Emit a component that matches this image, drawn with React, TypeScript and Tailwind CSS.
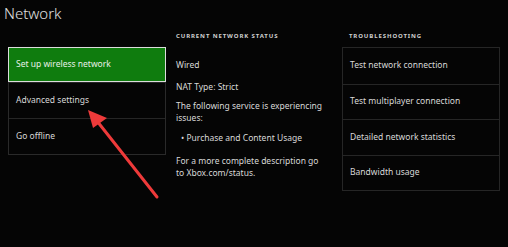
import React from "react";

const font = { fontFamily: '"Noto Sans", "Liberation Sans", Arial, sans-serif' };

const leftItems = ["Set up wireless network", "Advanced settings", "Go offline"];
const troubleItems = [
  "Test network connection",
  "Test multiplayer connection",
  "Detailed network statistics",
  "Bandwidth usage",
];

function Heading({ children }: { children: React.ReactNode }) {
  return (
    <div className="h-[18px] text-[6px] font-bold uppercase tracking-[0.9px] text-[#cfcfcf] leading-[14px]">
      {children}
    </div>
  );
}

export default function App() {
  return (
    <div
      className="relative w-[508px] h-[247px] bg-[#050505] overflow-hidden text-[#d8d8d8]"
      style={font}
    >
      <div className="pl-[4px] pt-[3px] text-[15px] leading-[20px] font-light text-[#e0e0e0]">
        Network
      </div>

      <div className="flex pl-[8px] pt-[6px]">
        {/* left menu */}
        <div className="w-[158px] mt-[18px]">
          <div className="border border-[#2a2a2a] border-t-0">
            {leftItems.map((item, i) =>
              i === 0 ? (
                <div
                  key={item}
                  className="h-[35px] flex items-center px-[7px] bg-[#0f7c0e] border-[1.5px] border-[#dcdcdc] -mx-px text-[8.5px] text-[#e8f0e8]"
                >
                  {item}
                </div>
              ) : (
                <div
                  key={item}
                  className="h-[36px] flex items-center px-[7px] border-t border-[#262626] first:border-t-0 text-[8.5px]"
                >
                  {item}
                </div>
              )
            )}
          </div>
        </div>

        {/* network status */}
        <div className="w-[158px] ml-[10px] text-[8.5px] leading-[12px]">
          <Heading>Current network status</Heading>
          <div className="pt-[12px]">Wired</div>
          <div className="mt-[10px]">NAT Type: Strict</div>
          <div className="mt-[7px] w-[150px]">
            The following service is experiencing issues:
          </div>
          <div className="mt-[8px] pl-[5px]">• Purchase and Content Usage</div>
          <div className="mt-[11px] w-[150px]">
            For a more complete description go to Xbox.com/status.
          </div>
        </div>

        {/* troubleshooting */}
        <div className="w-[158px] ml-[8px]">
          <div className="pl-[7px]">
            <Heading>Troubleshooting</Heading>
          </div>
          <div className="border border-[#262626]">
            {troubleItems.map((item) => (
              <div
                key={item}
                className="h-[35.5px] flex items-center px-[7px] border-t border-[#262626] first:border-t-0 text-[8.5px]"
              >
                {item}
              </div>
            ))}
          </div>
        </div>
      </div>

      {/* red annotation arrow */}
      <svg
        className="absolute left-0 top-0 pointer-events-none"
        width="508"
        height="247"
        viewBox="0 0 508 247"
      >
        <line x1="157" y1="197" x2="97" y2="121" stroke="#ee3a3a" strokeWidth="3" strokeLinecap="round" />
        <polygon points="88,110 93,128 107,118" fill="#ee3a3a" />
      </svg>
    </div>
  );
}
